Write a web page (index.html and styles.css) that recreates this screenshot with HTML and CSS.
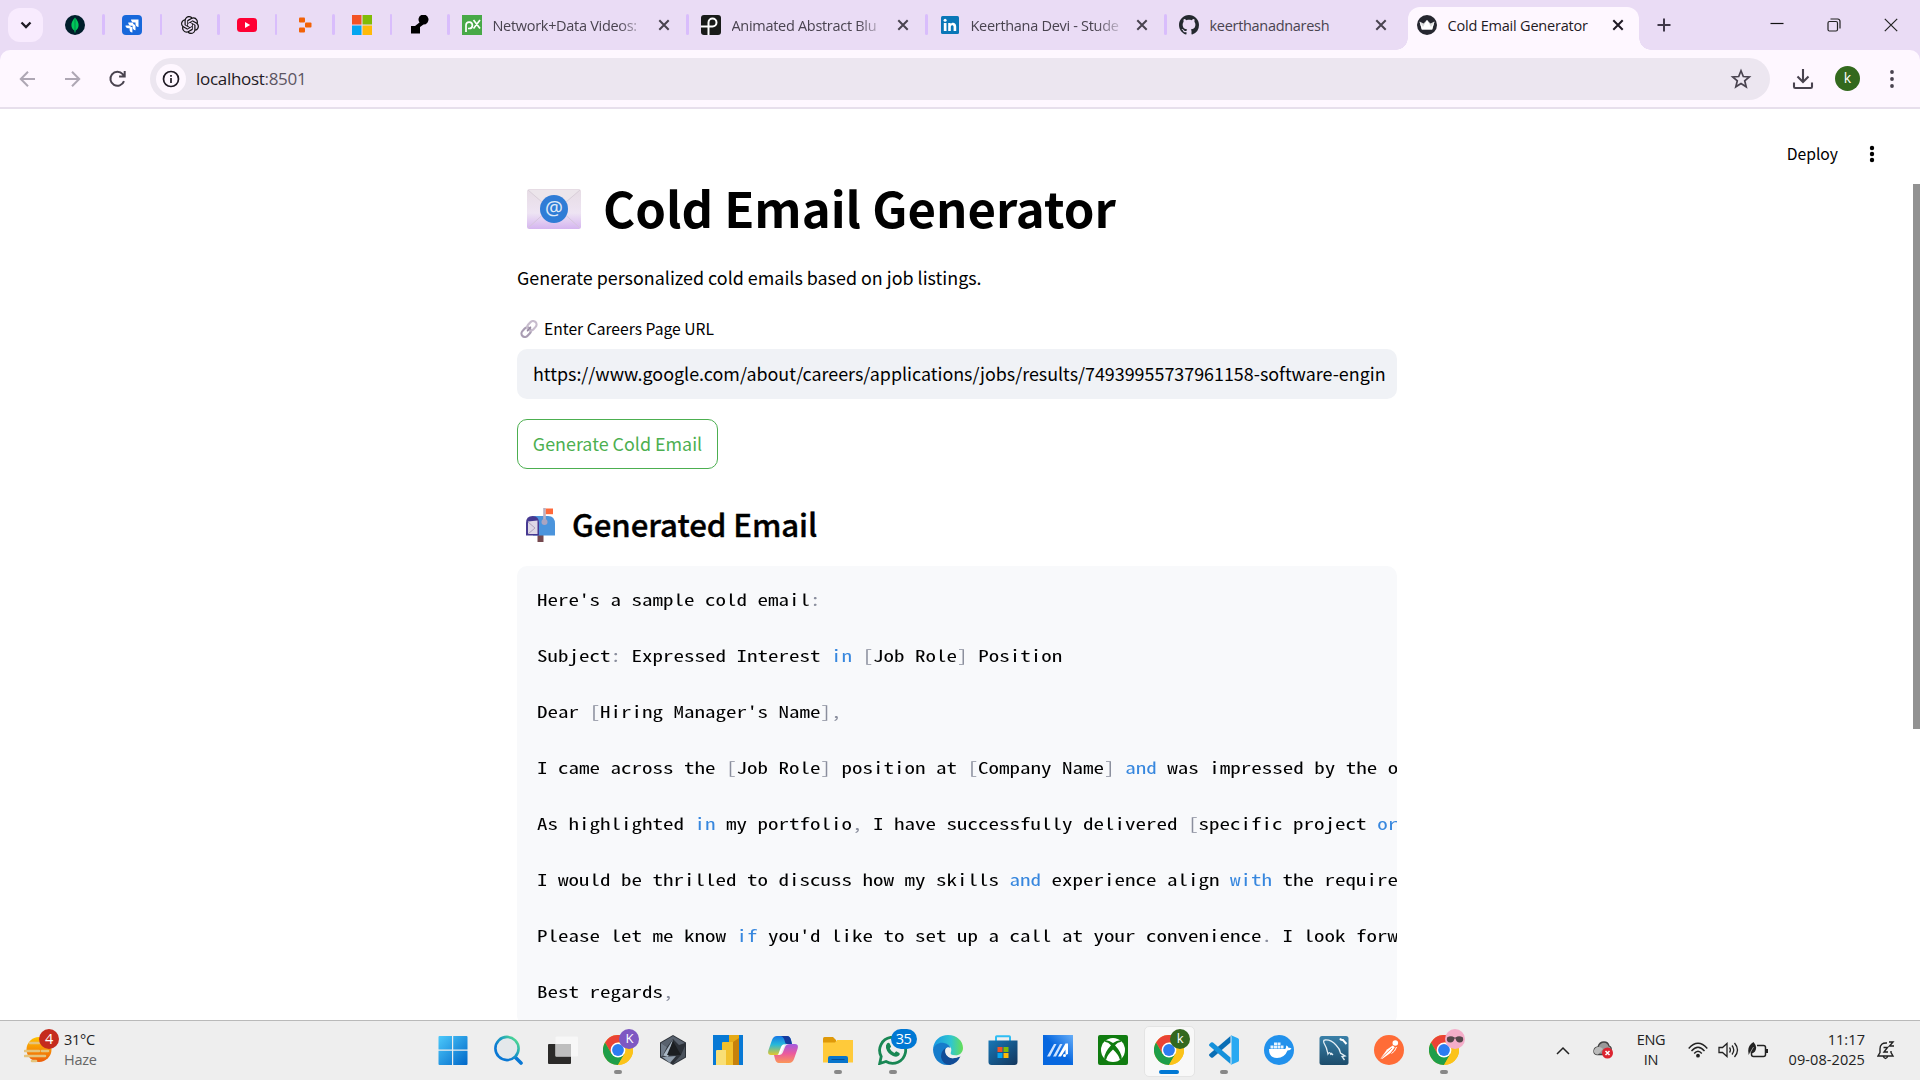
FILE: index.html
```html
<!DOCTYPE html>
<html lang="en">
<head>
<meta charset="utf-8">
<title>Cold Email Generator</title>
<link rel="stylesheet" href="styles.css">
</head>
<body>
<svg class="defs" aria-hidden="true">
  <symbol id="chrome" viewBox="0 0 30 30">
    <circle cx="15" cy="15" r="15" fill="#fbbc04"/>
    <path d="M2 7.5A15 15 0 0 1 28 7.5H15L8.5 18.7Z" fill="#ea4335"/>
    <path d="M2 7.5A15 15 0 0 0 15 30L21.5 18.7H8.5Z" fill="#1e9e49"/>
    <path d="M28 7.5H15L21.5 18.7 15 30A15 15 0 0 0 28 7.5Z" fill="#fbc31a"/>
    <circle cx="15" cy="15" r="7.4" fill="#fff"/>
    <circle cx="15" cy="15" r="5.9" fill="#2c7cf0"/>
  </symbol>
  <symbol id="close" viewBox="0 0 14 14"><path d="M2.3 2.3l9.4 9.4M11.7 2.3l-9.4 9.4" stroke="currentColor" stroke-width="2" fill="none"/></symbol>
</svg>

<header class="tabstrip">
  <button class="tab-search"><svg width="14" height="14" viewBox="0 0 14 14"><path d="M2.5 4.5L7 9l4.500-4.500" fill="none" stroke="#1f1a24" stroke-width="2.300"/></svg></button>
  <nav class="pinned">
    <span class="pin"><svg width="20" height="20" viewBox="0 0 20 20"><circle cx="10" cy="10" r="10" fill="#001e2b"/><path d="M10 2.500c2.500 3 3.600 5 3.600 7.500 0 2.800-1.400 4.500-3.200 5.800V17.500h-.8v-1.700C7.800 14.500 6.400 12.800 6.400 10c0-2.500 1.100-4.500 3.600-7.500z" fill="#00c85a"/><path d="M10 3v14" stroke="#007a45" stroke-width=".8"/></svg></span>
    <span class="pin"><svg width="20" height="20" viewBox="0 0 20 20"><rect width="20" height="20" rx="4" fill="#1868db"/><path d="M9 4.500h7.500V12c-2 0-3-1.500-3-3V7.500H12c-1.500 0-3-1-3-3z" fill="#fff"/><path d="M6.200 7.500h5V9c1 .3 2 .9 2.300 2v4.200c-1.800 0-2.900-1.400-2.900-2.900v-1.600H9c-1.500 0-2.800-1.300-2.800-3.200z" fill="#fff"/><path d="M3.500 10.500h5v1.200l1.900.5v5.300c-1.800 0-2.800-1.300-2.800-2.700v-1.600H6.100c-1.400 0-2.600-1-2.600-2.700z" fill="#fff"/></svg></span>
    <span class="pin"><svg width="18" height="18" viewBox="0 0 24 24"><path fill="#111" d="M22.282 9.821a5.985 5.985 0 0 0-.516-4.910 6.046 6.046 0 0 0-6.510-2.900A6.065 6.065 0 0 0 4.981 4.182a5.985 5.985 0 0 0-3.998 2.900 6.046 6.046 0 0 0 .743 7.097 5.980 5.980 0 0 0 .510 4.911 6.051 6.051 0 0 0 6.515 2.900A5.985 5.985 0 0 0 13.260 24a6.056 6.056 0 0 0 5.772-4.206 5.990 5.990 0 0 0 3.998-2.900 6.056 6.056 0 0 0-.748-7.073zM13.260 22.430a4.476 4.476 0 0 1-2.876-1.040l.141-.081 4.779-2.758a.795.795 0 0 0 .392-.681v-6.737l2.020 1.169a.071.071 0 0 1 .038.052v5.583a4.504 4.504 0 0 1-4.494 4.494zM3.600 18.304a4.471 4.471 0 0 1-.535-3.014l.142.085 4.783 2.759a.771.771 0 0 0 .780 0l5.843-3.369v2.332a.080.080 0 0 1-.033.062L9.740 19.950a4.499 4.499 0 0 1-6.140-1.646zM2.341 7.896a4.485 4.485 0 0 1 2.366-1.973V11.600a.766.766 0 0 0 .388.676l5.815 3.355-2.020 1.168a.076.076 0 0 1-.071 0l-4.830-2.786A4.504 4.504 0 0 1 2.341 7.872zm16.597 3.855l-5.833-3.387L15.119 7.200a.076.076 0 0 1 .071 0l4.830 2.791a4.494 4.494 0 0 1-.676 8.105v-5.678a.790.790 0 0 0-.407-.667zm2.010-3.023l-.141-.085-4.774-2.782a.776.776 0 0 0-.785 0L9.409 9.230V6.897a.066.066 0 0 1 .028-.061l4.830-2.787a4.499 4.499 0 0 1 6.680 4.660zm-12.640 4.135l-2.020-1.164a.080.080 0 0 1-.038-.057V6.075a4.499 4.499 0 0 1 7.375-3.453l-.142.080-4.778 2.758a.795.795 0 0 0-.393.681zm1.097-2.365l2.602-1.500 2.607 1.500v2.999l-2.597 1.500-2.607-1.500z"/></svg></span>
    <span class="pin"><svg width="20" height="14" viewBox="0 0 20 14"><rect width="20" height="14" rx="3.500" fill="#ff0033"/><path d="M8 4l5.200 3L8 10z" fill="#fff"/></svg></span>
    <span class="pin"><svg width="20" height="20" viewBox="0 0 20 20"><g fill="#f26207"><rect x="4" y="2.500" width="6" height="5" rx="1"/><rect x="10" y="7.500" width="6.500" height="5" rx="1"/><rect x="4" y="12.500" width="6" height="5" rx="1"/></g></svg></span>
    <span class="pin"><svg width="20" height="20" viewBox="0 0 20 20"><path fill="#f35325" d="M0 0h9.500v9.500H0z"/><path fill="#81bc06" d="M10.500 0H20v9.500h-9.500z"/><path fill="#05a6f0" d="M0 10.500h9.500V20H0z"/><path fill="#ffba08" d="M10.500 10.500H20V20h-9.500z"/></svg></span>
    <span class="pin"><svg width="20" height="20" viewBox="0 0 20 20"><path d="M1 11h4l4.500-3.500a5 5 0 1 1 4 2L10 12v6.500H1z" fill="#000"/></svg></span>
  </nav>
  <article class="tab"><svg width="20" height="20" viewBox="0 0 20 20"><path fill="#48a947" d="M0 0h20v20H0z"/><path d="M4 17v-7a3.200 3.200 0 1 1 3.200 3.500H6M11.500 5l6.500 8.500M18 5l-6.500 8.500" fill="none" stroke="#fff" stroke-width="1.700"/></svg><span class="tab-title fade">Network+Data Videos:</span><svg class="x"><use href="#close"/></svg></article>
  <article class="tab"><svg width="20" height="20" viewBox="0 0 20 20"><rect width="20" height="20" rx="3" fill="#191b19"/><path d="M0 11.500h11.500a4 4 0 1 0-4-4V20" fill="none" stroke="#fff" stroke-width="2"/></svg><span class="tab-title fade">Animated Abstract Blu</span><svg class="x"><use href="#close"/></svg></article>
  <article class="tab"><svg width="20" height="20" viewBox="0 0 20 20"><rect x="1" y="1" width="18" height="18" rx="1.500" fill="#0a77b7"/><path d="M3.800 8h2.700v8H3.800zM8.200 8h2.500v1.100c1.500-2.300 5.500-1.500 5.500 2.300V16h-2.600v-4.100c0-2.300-2.800-2-2.800 0V16H8.200z" fill="#fff"/><circle cx="5.100" cy="5.200" r="1.500" fill="#fff"/></svg><span class="tab-title fade">Keerthana Devi - Stude</span><svg class="x"><use href="#close"/></svg></article>
  <article class="tab"><svg width="20" height="20" viewBox="0 0 16 16"><path fill="#24292f" d="M8 0C3.580 0 0 3.580 0 8c0 3.540 2.290 6.530 5.470 7.590.4.070.55-.17.55-.38 0-.19-.01-.82-.01-1.490-2.010.37-2.530-.49-2.690-.94-.09-.23-.48-.94-.82-1.130-.28-.15-.68-.52-.01-.53.63-.01 1.080.58 1.230.82.72 1.210 1.870.87 2.330.66.07-.52.28-.87.51-1.070-1.780-.2-3.640-.89-3.640-3.950 0-.87.31-1.590.82-2.150-.08-.2-.36-1.020.08-2.120 0 0 .67-.21 2.200.82.64-.18 1.320-.27 2-.27s1.360.09 2 .27c1.530-1.040 2.200-.82 2.200-.82.44 1.100.16 1.920.08 2.120.51.56.82 1.270.82 2.150 0 3.070-1.870 3.750-3.650 3.950.29.25.54.73.54 1.480 0 1.070-.01 1.930-.01 2.200 0 .21.15.46.55.38A8.010 8.010 0 0 0 16 8c0-4.420-3.580-8-8-8z"/></svg><span class="tab-title">keerthanadnaresh</span><svg class="x"><use href="#close"/></svg></article>
  <article class="tab active"><svg width="20" height="20" viewBox="0 0 20 20"><circle cx="10" cy="10" r="10" fill="#262730"/><path d="M2.500 6.500L6.500 8.500 10 5l3.500 3.500 4-2-2.300 8H4.800z" fill="#d9dadb"/><path d="M2.500 6.500L6 12l4-7 4 7 3.500-5.500-2.300 8H4.800z" fill="#fff"/></svg><span class="tab-title">Cold Email Generator</span><svg class="x"><use href="#close"/></svg></article>
  <button class="new-tab"><svg width="14" height="14" viewBox="0 0 14 14"><path d="M7 .5v13M.5 7h13" stroke="#40384a" stroke-width="2"/></svg></button>
  <div class="window-buttons">
    <svg width="14" height="14" viewBox="0 0 14 14"><path d="M.5 5.500h13" stroke="#111" stroke-width="1.200"/></svg>
    <svg width="14" height="14" viewBox="0 0 14 14" fill="none" stroke="#222" stroke-width="1.200"><rect x="1" y="3.500" width="9.500" height="9.500" rx="1.500"/><path d="M3.500 1h7.200A2.500 2.500 0 0 1 13 3.500V10.500"/></svg>
    <svg width="14" height="14" viewBox="0 0 14 14"><path d="M.8.8l12.400 12.400M13.200.8L.8 13.200" stroke="#222" stroke-width="1.200"/></svg>
  </div>
</header>

<div class="toolbar-wrap"><div class="toolbar">
  <svg class="nav-icon dim" viewBox="0 0 20 20"><path d="M17 10H3M10 2.800L2.800 10l7.200 7.200"/></svg>
  <svg class="nav-icon dim" viewBox="0 0 20 20"><path d="M2 10h14M9 2.800l7.200 7.200L9 17.200"/></svg>
  <svg class="nav-icon" viewBox="0 0 20 20"><path d="M16 12.200A7 7 0 1 1 14.700 5.200L16.500 7M16.700 2v5.600h-5.600"/></svg>
  <div class="omnibox">
    <span class="info"><svg width="18" height="18" viewBox="0 0 18 18"><circle cx="9" cy="9" r="7.500" fill="none" stroke="#1f1a24" stroke-width="1.700"/><path d="M9 8v5M9 5v1.700" stroke="#1f1a24" stroke-width="1.700"/></svg></span>
    <span class="url">localhost<span>:8501</span></span>
    <svg class="star" width="22" height="22" viewBox="0 0 22 22"><path d="M11 2.800l2.300 5.700 6 .4-4.600 3.900 1.500 6L11 15.500l-5.200 3.300 1.500-6-4.600-3.900 6-.4z" fill="none" stroke="#49434f" stroke-width="1.700"/></svg>
  </div>
  <svg class="download" width="22" height="22" viewBox="0 0 22 22"><path d="M11 1v13M5.500 8.500L11 14l5.500-5.500M2 14.500v4.200q0 1.300 1.300 1.300h15.400q1.300 0 1.300-1.300v-4.200" fill="none" stroke="#49434f" stroke-width="2.100"/></svg>
  <span class="avatar">k</span>
  <svg class="menu" width="6" height="20" viewBox="0 0 6 20" fill="#49434f"><circle cx="3" cy="3" r="1.900"/><circle cx="3" cy="10" r="1.900"/><circle cx="3" cy="17" r="1.900"/></svg>
</div></div>

<main class="page">
  <div class="app-header"><span>Deploy</span><svg width="6" height="18" viewBox="0 0 6 18"><circle cx="3" cy="3" r="2.200"/><circle cx="3" cy="9" r="2.200"/><circle cx="3" cy="15" r="2.200"/></svg></div>
  <div class="scroll-thumb"></div>
  <section class="column">
    <h1><svg width="54" height="40" viewBox="0 0 54 40"><defs><linearGradient id="env" x2="0" y2="1"><stop stop-color="#e6dce4"/><stop offset=".6" stop-color="#eee4f3"/><stop offset="1" stop-color="#d5b5f0"/></linearGradient></defs><rect width="54" height="40" rx="2.500" fill="url(#env)"/><path d="M1 39L21 21M53 39L33 21" stroke="#d5c5dc" fill="none"/><path d="M1 1l22 19q4 3 8 0L53 1" fill="#ece5eb" stroke="#d9ced9"/><circle cx="27" cy="20" r="14" fill="#2f7cd6"/><text x="27" y="26" text-anchor="middle" class="at">@</text></svg><span>Cold Email Generator</span></h1>
    <p class="intro">Generate personalized cold emails based on job listings.</p>
    <label class="field-label"><svg width="18" height="18" viewBox="0 0 18 18" fill="none" stroke-width="2.200"><g transform="rotate(-48 9 9)"><rect x="-.5" y="5.500" width="10.500" height="7" rx="3.500" stroke="#a99db3"/><rect x="8" y="5.500" width="10.500" height="7" rx="3.500" stroke="#c7bccd"/><path d="M6 9h6" stroke="#94879f" stroke-width="1.200"/></g></svg><span>Enter Careers Page URL</span></label>
    <div class="url-input"><span>https://www.google.com/about/careers/applications/jobs/results/74939955737961158-software-engin</span></div>
    <button class="generate">Generate Cold Email</button>
    <h2><svg width="30" height="36" viewBox="0 0 30 36"><path d="M11.500 28h6v7h-6z" fill="#75494f"/><path d="M7 9h15q7 0 7 8v11.500H7z" fill="#4b94dc"/><path d="M0 28.500V16q0-7 6.500-7t6.500 7v12.500z" fill="#463991"/><path d="M2 27V14.500l9.500-1V27z" fill="#ded8e6"/><path d="M2 15l7 6-7 6" fill="none" stroke="#afa3bd"/><path d="M18.500 1v14" stroke="#b9b0c2" stroke-width="2.600"/><circle cx="18.500" cy="15" r="3" fill="#aaa4c1"/><path d="M19.800 1.500H27v5.700h-7.200z" fill="#ff693a"/></svg><span>Generated Email</span></h2>
    <div class="code"><div class="lines">
      <p>Here's a sample cold email<i>:</i></p>
      <p>Subject<i>:</i> Expressed Interest <b>in</b> <i>[</i>Job Role<i>]</i> Position</p>
      <p>Dear <i>[</i>Hiring Manager's Name<i>],</i></p>
      <p>I came across the <i>[</i>Job Role<i>]</i> position at <i>[</i>Company Name<i>]</i> <b>and</b> was impressed by the o</p>
      <p>As highlighted <b>in</b> my portfolio<i>,</i> I have successfully delivered <i>[</i>specific project <b>or</b></p>
      <p>I would be thrilled to discuss how my skills <b>and</b> experience align <b>with</b> the require</p>
      <p>Please let me know <b>if</b> you'd like to set up a call at your convenience<i>.</i> I look forw</p>
      <p>Best regards<i>,</i></p>
    </div></div>
  </section>
</main>

<footer class="taskbar">
  <div class="weather">
    <span class="weather-icon"><svg width="30" height="30" viewBox="0 0 30 30"><defs><linearGradient id="sun" x2="0" y2="1"><stop stop-color="#ffc400"/><stop offset="1" stop-color="#ed5c0b"/></linearGradient></defs><circle cx="15" cy="14.500" r="12.500" fill="url(#sun)"/><g stroke="#e5c47c" stroke-width="2.600" stroke-linecap="round"><path d="M6 8h9M1 16h14M18 16h6M1 21h20M8 26h4"/></g></svg><b>4</b></span>
    <div class="weather-text"><span>31°C</span><span class="muted">Haze</span></div>
  </div>
  <div class="apps">
    <span class="app"><svg viewBox="0 0 30 30"><defs><linearGradient id="win" x2="1" y2="1"><stop stop-color="#4cc9fb"/><stop offset="1" stop-color="#0067c8"/></linearGradient></defs><path fill="url(#win)" d="M.5 2q0-1 1-1H14v13.500H.5zM15.200 1H28.500q1 0 1 1v12.500H15.200zM.5 15.700H14V30H1.500q-1 0-1-1zM15.200 15.700h14.300V29q0 1-1 1H15.200z"/></svg></span>
    <span class="app"><svg viewBox="0 0 30 30"><defs><linearGradient id="ring" x1="0" y1="1" x2="1" y2="0"><stop offset=".3" stop-color="#0a78d4"/><stop offset=".6" stop-color="#1e9fc0"/><stop offset="1" stop-color="#5fee80"/></linearGradient></defs><path d="M22 22l6 6" stroke="#0a78d4" stroke-width="3.600" stroke-linecap="round"/><circle cx="14" cy="13.500" r="11.600" fill="#e4e8eb" stroke="url(#ring)" stroke-width="2.600"/></svg></span>
    <span class="app"><svg viewBox="0 0 30 30"><rect x="0" y="9" width="23" height="20" rx="1" fill="#2b2a29"/><rect x="7.500" y="1.500" width="22.500" height="20" rx="1" fill="#f7f7f7" fill-opacity=".92"/><path d="M7.500 9H23v12.500H7.500z" fill="#bebebe"/></svg></span>
    <span class="app run"><svg viewBox="0 0 30 30"><use href="#chrome"/></svg><b class="profile purple">K</b></span>
    <span class="app"><svg viewBox="0 0 30 30"><path d="M15 0l13 7.500v15L15 30 2 22.500v-15z" fill="#2c3138"/><path d="M15 1l12 7-6 2-6-6-6 8-6-4z" fill="#59626e"/><path d="M3 8l6 4-5 10-1-1z" fill="#707b88"/><path d="M15 4.500l-10 16 5 1.500z" fill="#a9b7c4"/><path d="M4 22l14-1-6 7z" fill="#8f9dab"/><path d="M15 6l8 14-14 0z" fill="#1b1e21"/><path d="M23 20l4-9v11l-12 7z" fill="#4b535d"/></svg></span>
    <span class="app"><svg viewBox="0 0 30 30"><path fill="#0879d5" d="M0 0h30v30H0z"/><path fill="#e5aa17" d="M16 0h10v30H16z"/><path fill="#c7810b" d="M20 7l6-4v27h-6z"/><path fill="#f2c12d" d="M9 8q0-1 1-1h10v23H9z"/><path fill="#f9df76" d="M3 16q0-1 1-1h9v15H3z"/></svg></span>
    <span class="app"><svg viewBox="0 0 30 30"><defs><linearGradient id="c1" x2="0" y2="1"><stop stop-color="#1677e6"/><stop offset=".45" stop-color="#26b8da"/><stop offset="1" stop-color="#e4c72b"/></linearGradient><linearGradient id="c2" x2="0" y2="1"><stop stop-color="#a15be0"/><stop offset=".5" stop-color="#eb5a9e"/><stop offset="1" stop-color="#fb9758"/></linearGradient></defs><path d="M9 1h10q3 0 4 4l1 4h-5q-3 0-4 3l-2 5q-1 3-5 3H3q-4 0-2.500-5L4 5q1.500-4 5-4z" fill="url(#c1)"/><path d="M21 28H11q-3 0-4-4l-1-4h5q3 0 4-3l2-5q1-3 5-3h5q4 0 2.500 5L26 24q-1.500 4-5 4z" fill="url(#c2)"/><path d="M9 1h10q3 0 4 4l1 4h-5q-2 0-2-2-1-5-4-6z" fill="#163b9e"/><path d="M13 12q1-3 5-3h-1l-4 9q-1 2-3 2z" fill="#fff"/></svg></span>
    <span class="app run"><svg viewBox="0 0 30 30"><path d="M0 3.500q0-1.500 1.500-1.500H10l3 3v5H0z" fill="#df9909"/><path d="M0 7.500h12l2-2.500h16v22.500H0z" fill="#ffca3a"/><path d="M5 28v-5q0-2 2-2h16q2 0 2 2v5z" fill="#0875cc"/><path d="M8.500 24.500h13" stroke="#044f95"/></svg></span>
    <span class="app run"><svg viewBox="0 0 30 30"><path d="M3.200 21.500A13 13 0 1 1 8 26.500L1.700 28.500z" fill="none" stroke="#198754" stroke-width="2.800"/><path d="M9 8.500q1.500-1.500 2.700 0l1.400 3-1.300 2q1.300 3 4.600 4.500l1.800-1.700 3.200 1.600q1 1-.4 2.700-2 2-6 .5Q9.500 18.500 8 13q-.5-3 1-4.500z" fill="#198754"/></svg><b class="count">35</b></span>
    <span class="app"><svg viewBox="0 0 30 30"><defs><linearGradient id="ed1"><stop stop-color="#1798e5"/><stop offset=".6" stop-color="#30c6cf"/><stop offset="1" stop-color="#66df54"/></linearGradient></defs><path d="M0 14C1 5 7 0 15 0c9 0 15 6 15 13 0 5-4 7.500-8 7.500-4 0-5.500-1.500-4-3.500C20 11 13 8 8 9c-4 .7-7 3-8 5z" fill="url(#ed1)"/><path d="M0 14C2 9 7 7 11 8c4 .8 6 3 6.500 5-3-2-6.500 1-6.500 5 0 5 5 9 10 8.500-2.500 3-4.500 3.500-7 3.500C6 30 0 23 0 14z" fill="#167ccb"/><path d="M12.500 13q-1.500 6 3 9t12-.7Q24 29 17 30q-8-1-9-8 0-6 4.500-9z" fill="#114c97"/><path d="M13.500 13q-2 3.500 0 7 3 4 7 3l6.500-1.500 1-.5q-4 0-8-1-4-1-2-4 0-2-4.500-3z" fill="#eee" fill-opacity=".9"/></svg></span>
    <span class="app"><svg viewBox="0 0 30 30"><defs><linearGradient id="store" x2="1" y2="1"><stop stop-color="#1877b6"/><stop offset="1" stop-color="#13365d"/></linearGradient></defs><path d="M8 6V2q0-.7.8-.7h12.400q.8 0 .8.700v4" fill="none" stroke="#2fbdf3" stroke-width="2"/><path d="M.5 5.500h29V27q0 3-3 3h-23q-3 0-3-3z" fill="url(#store)"/><path fill="#f35325" d="M9.500 12h5v5h-5z"/><path fill="#81bc06" d="M15.500 12h5v5h-5z"/><path fill="#05a6f0" d="M9.500 18h5v5h-5z"/><path fill="#ffba08" d="M15.500 18h5v5h-5z"/></svg></span>
    <span class="app"><svg viewBox="0 0 30 30"><defs><linearGradient id="asus" x1="0" y1="1" x2="1" y2="0"><stop offset=".5" stop-color="#0767df"/><stop offset="1" stop-color="#67aef8"/></linearGradient></defs><path d="M0 0h30v30H0z" fill="url(#asus)"/><path d="M4 21.500L11 9h2.500L7 21.500zM10 21.500L17 9h2.500L13 21.500z" fill="#cde2ff"/><path d="M15 21.500L22.500 8.500H25V19l-2.500 1v-5.500l-4.500 7z" fill="#fff"/><circle cx="21.500" cy="20.500" r="1.500" fill="#fff"/></svg></span>
    <span class="app"><svg viewBox="0 0 30 30"><rect width="30" height="30" rx="2" fill="#107c10"/><circle cx="15" cy="15" r="12" fill="#fff"/><path d="M6 5.500Q10 4.500 15 8q5-3.500 9-2.500L22.500 7Q20 7 17 10.300q7 7.700 6.700 13.500L22 25q-1-5-7-10.500Q9 20 8 25l-1.700-1.200Q6 18 13 10.300 10 7 7.500 7z" fill="#107c10"/></svg></span>
    <span class="app focused"><svg viewBox="0 0 30 30"><use href="#chrome"/></svg><b class="profile green">k</b></span>
    <span class="app run"><svg viewBox="0 0 30 30"><path d="M21.500 1v6.500L4 22.500q-1 .7-2 0L.5 21q-1-1 0-2z" fill="#0a6eb5"/><path d="M21.500 29v-6.500L4 7.500q-1-.7-2 0L.5 9q-1 1 0 2z" fill="#1591db"/><path d="M21.500 0L29 3.300q1 .5 1 1.500v20.400q0 1-1 1.500L21.500 30q1-.8 1-2V2q0-1.200-1-2z" fill="#29a9f2"/></svg></span>
    <span class="app"><svg viewBox="0 0 30 30"><circle cx="15" cy="15" r="15" fill="#2191ec"/><path d="M5 14h16q1.500-.5 1-3.500 2 .5 2.500 2.300 2-.2 3 .7-1 2-4 2Q20.500 23 13 23 5 23 5 14z" fill="#fff"/><path d="M6.500 10.500h3v3h-3zM10 10.500h3v3h-3zM13.500 10.500h3v3h-3zM17 10.500h2.500v3H17zM10 7.500h3v2.500h-3zM13.500 7.500h3v2.500h-3z" fill="#e9f4fe"/></svg></span>
    <span class="app"><svg viewBox="0 0 30 30"><defs><linearGradient id="sql" x2="0" y2="1"><stop stop-color="#3a80a8"/><stop offset="1" stop-color="#1c4c6b"/></linearGradient></defs><rect x=".5" y="1" width="29" height="29" rx="2.500" fill="url(#sql)"/><path d="M12 20q-1-4-3-1Q8 13 5 8q-1-3 1-3 6-.5 11 5 4 4 4.500 8l4.500 3-3 .5 2.500 3.500M14 20l-2-2" fill="none" stroke="#e5eff5" stroke-width="1.300"/><path d="M21 3.500q1 2 3 1.500l3.500 4" fill="none" stroke="#fff" stroke-width="2"/></svg></span>
    <span class="app"><svg viewBox="0 0 30 30"><circle cx="15" cy="15" r="15" fill="#ff6c37"/><circle cx="21.300" cy="8" r="2.800" fill="#fff"/><path d="M18.800 10.500l2 1.700-4.300 5.800-8.500 6-1.500-.5 6.500-9z" fill="#fff"/><path d="M7 23.500L18 13" stroke="#ff6c37" stroke-width=".8"/><path d="M22.500 12l-2 4-3 2.500" fill="none" stroke="#fff"/></svg></span>
    <span class="app run"><svg viewBox="0 0 30 30"><use href="#chrome"/></svg><b class="profile pink"><svg viewBox="0 0 20 20"><path d="M2 8.500Q6 6 9.500 8.500h1Q14 6 18 8.500q1 5-3.500 5-3.200 0-4-4h-1q-.8 4-4 4-4.500 0-3.500-5z" fill="#55474c"/></svg></b></span>
  </div>
  <div class="tray">
    <svg width="14" height="9" viewBox="0 0 14 9"><path d="M1 8l6-6 6 6" fill="none" stroke="#222" stroke-width="1.500"/></svg>
    <svg class="cloud" width="20" height="18" viewBox="0 0 20 18"><path d="M4 13.500q-3.500-.5-3-4Q1.500 6.500 5 6q1.500-5 6-5 4 0 5 4 3 1 2 5l-2 3.500z" fill="#999" stroke="#444" stroke-width="1.300"/><path d="M5 6q3-.5 5 2l-5 5.500H4Q.5 12.500 1 9.500 2 6 5 6z" fill="#bbb"/><circle cx="14.500" cy="12" r="5.500" fill="#dc2430"/><path d="M12.500 10l4 4m0-4l-4 4" stroke="#fff" stroke-width="1.500"/></svg>
    <div class="lang"><span>ENG</span><span>IN</span></div>
    <svg class="wifi" width="20" height="16" viewBox="0 0 20 16" fill="none" stroke="#222" stroke-width="1.400"><path d="M.7 6.500q9.300-10.500 18.600 0M3.500 9q6.500-7.500 13 0M6.200 11.500q3.800-4.500 7.600 0"/><circle cx="10" cy="13.700" r="1.200" fill="#222"/></svg>
    <svg class="sound" width="21" height="16" viewBox="0 0 21 16" fill="none" stroke="#222" stroke-width="1.300"><path d="M1 5.500h3.500L9 1.500v13l-4.500-4H1z"/><path d="M11.500 5.500q1.800 2.500 0 5M14 3.500q3.500 4.500 0 9M16.500 1q6 7 0 14"/></svg>
    <svg class="battery" width="20" height="17" viewBox="0 0 20 17"><path d="M9 3.500h6.500q2 0 2 2v7q0 2-2 2h-10q-2 0-2-2V11" fill="none" stroke="#222" stroke-width="1.500"/><path d="M18 7h2v4h-2zM.5 11Q-1 4 5.500 0q4.500 5 1.500 9.500-2.500 3-5 1L.5 13z" fill="#222"/><path d="M2 11L5.500 5" stroke="#eee" stroke-width=".6"/></svg>
    <div class="clock"><span>11:17</span><span>09-08-2025</span></div>
    <svg class="bell" width="18" height="19" viewBox="0 0 18 19" fill="none" stroke="#222" stroke-width="1.400"><path d="M10 2Q3 1.500 3 8v3.500L1 15h15l-2-3.500V10M6 15q2.500 5 5 0"/><path d="M6.500 6.500h4L7 11h4M12 1h4l-3.500 4H17"/></svg>
  </div>
</footer>
</body>
</html>
```
FILE: styles.css
```css
* { box-sizing: border-box; }
body {
  margin: 0; width: 1920px; height: 1080px; overflow: hidden;
  display: flex; flex-direction: column; background: #fff; color: #000;
  font-family: "Noto Sans CJK JP", "Noto Sans", sans-serif;
}
svg { display: block; flex: none; }
button { border: 0; padding: 0; background: none; font: inherit; display: flex; align-items: center; justify-content: center; }
.defs { display: none; }

/* Tab strip */
.tabstrip { flex: none; height: 50px; display: flex; background: #eadcf5; font: 14.500px "Open Sans", sans-serif; letter-spacing: -.3px; color: #49434f; }
.tab-search { width: 35px; height: 34px; margin: 8px 3px 0 8px; border-radius: 12px; background: #f8ebfe; }
.pinned { display: flex; width: 402.500px; }
.pin { position: relative; flex: 1; display: flex; align-items: center; justify-content: center; }
.pin::after, .tab::after { content: ""; position: absolute; right: -1px; top: 14px; width: 2.500px; height: 21px; border-radius: 2px; background: #d9bdfc; }
.tab { position: relative; width: 239px; display: flex; align-items: center; padding: 0 17px 0 13px; gap: 11px; }
.tab-title { flex: 1; overflow: hidden; white-space: nowrap; }
.fade { mask-image: linear-gradient(90deg, #000 82%, transparent 101%); }
.x { width: 14px; height: 14px; }
.tab.active { width: 231px; margin: 7px 0 0 3px; padding: 0 14px 7px 9px; border-radius: 12px 12px 0 0; background: #fef7ff; color: #1f1a24; letter-spacing: -.2px; }
.tab.active::before, .tab.active::after { content: ""; position: absolute; display: block; top: auto; bottom: 0; width: 12px; height: 12px; border-radius: 0; }
.tab.active::before { left: -12px; background: radial-gradient(circle at 0 0, transparent 11.500px, #fef7ff 12px); }
.tab.active::after { right: -12px; background: radial-gradient(circle at 100% 0, transparent 11.500px, #fef7ff 12px); }
.tab:has(+ .active)::after { display: none; }
.new-tab { width: 50px; }
.window-buttons { display: flex; gap: 43px; align-items: center; margin: -1px 22px 0 auto; }

/* Toolbar */
.toolbar-wrap { flex: none; background: #eadcf5; }
.toolbar { height: 59px; display: flex; align-items: center; padding: 0 25px 0 18px; background: #fef7ff; border-bottom: 2px solid #e7dfec; border-radius: 10px 10px 0 0; }
.nav-icon { width: 20px; height: 20px; margin-right: 25px; fill: none; stroke: #49434f; stroke-width: 2; }
.nav-icon:nth-child(3) { margin-right: 22px; }
.dim { stroke: #aea7b4; }
.omnibox { flex: 1; height: 42px; display: flex; align-items: center; padding: 0 18px 0 6px; border-radius: 21px; background: #ece6f0; }
.info { width: 30px; height: 30px; border-radius: 50%; background: #fef7ff; display: flex; align-items: center; justify-content: center; }
.url { flex: 1; margin-left: 10px; font: 17px "Open Sans", sans-serif; letter-spacing: -.3px; color: #1f1a24; }
.url span { color: #5c5562; }
.download { margin: 0 21px 0 22px; }
.avatar { width: 25px; height: 25px; border-radius: 50%; background: #33691e; color: #fff; font: 14px/24px "Open Sans", sans-serif; text-align: center; }
.menu { margin-left: 29px; }

/* Page */
.page { position: relative; flex: 1; min-height: 0; overflow: hidden; }
.app-header { position: absolute; top: 32px; right: 45px; height: 26px; display: flex; align-items: center; gap: 31px; font-size: 15.700px; }
.app-header span { padding-bottom: 2px; }
.scroll-thumb { position: absolute; right: 0; top: 75px; width: 7px; height: 545px; background: #929292; }
.column { width: 880px; margin-left: 517px; padding-top: 67px; display: flex; flex-direction: column; }
h1, h2, p { margin: 0; }
h1 { height: 66px; padding-left: 10px; display: flex; align-items: center; gap: 22px; font-size: 49.100px; font-weight: 700; line-height: 66px; white-space: nowrap; }
h1 span { padding-bottom: 4px; }
.at { font: 20px "Noto Sans", sans-serif; fill: #dfe9f8; }
.intro { margin-top: 19px; height: 32px; line-height: 32px; font-size: 17.900px; }
.field-label { margin-top: 23px; height: 26px; padding-left: 3px; display: flex; align-items: center; gap: 6px; font-size: 15.650px; }
.field-label span { padding-bottom: 1px; }
.url-input { margin-top: 7px; height: 50px; padding: 0 10px 0 16px; border-radius: 10px; background: #f0f2f6; line-height: 48px; font-size: 17.900px; letter-spacing: -.008px; }
.url-input span { display: block; overflow: hidden; white-space: nowrap; }
.generate { margin-top: 20px; width: 201px; height: 50px; padding-bottom: 2px; border: 1px solid #4caf50; border-radius: 10px; color: #4caf50; font-size: 17.900px; }
h2 { margin-top: 34px; height: 44px; padding-left: 9px; display: flex; align-items: center; gap: 16px; font-size: 31.200px; font-weight: 500; line-height: 44px; letter-spacing: -.08px; -webkit-text-stroke: .4px #000; }
h2 span { padding-bottom: 2px; }
.code { margin-top: 19px; padding: 19px 0 20px 20px; border-radius: 10px; background: #f8f9fb; overflow: hidden; }
.lines { width: 655px; display: flex; flex-direction: column; gap: 28px; white-space: pre; font: 16px/28px "Noto Sans Mono CJK JP", "Liberation Mono", monospace; transform: scaleX(1.3125); transform-origin: 0 0; }
.lines i { font-style: normal; color: #8a8e9d; }
.lines b { font-weight: inherit; color: #3787de; }

/* Taskbar */
.taskbar { flex: none; height: 60px; padding-bottom: 1px; display: flex; align-items: center; border-top: 1px solid #b9b9b9; background: #eee; color: #222; font: 14.500px/20px "Open Sans", sans-serif; letter-spacing: -.3px; }
.weather { width: 425px; padding-left: 24px; display: flex; align-items: center; gap: 10px; }
.weather-icon { position: relative; }
.weather-icon b { position: absolute; left: 15px; top: -6px; width: 20px; height: 20px; border-radius: 50%; background: #c52b1d; color: #fff; text-align: center; font-weight: 400; }
.weather-text, .lang, .clock { display: flex; flex-direction: column; margin-top: -1px; }
.muted { color: #666; }
.apps { display: flex; }
.app { position: relative; width: 55.080px; height: 58px; display: flex; align-items: center; justify-content: center; }
.app > svg { position: relative; width: 30px; height: 30px; }
.app.run::after, .app.focused::after { content: ""; position: absolute; bottom: 5px; width: 8px; height: 4px; border-radius: 2px; background: #888; }
.app.focused::after { width: 20px; background: #0078d4; }
.app.focused::before { content: ""; position: absolute; left: 3px; top: 5px; width: 49px; height: 49px; border: 1px solid #e4e4e4; border-radius: 5px; background: #f8f8f8; }
.profile { position: absolute; left: 29px; top: 8px; width: 20px; height: 20px; border-radius: 50%; color: #fff; font: 13px/19px "Open Sans", sans-serif; text-align: center; }
.purple { background: #7e57c2; }
.green { background: #33691e; }
.pink { background: #f4adc9; }
.count { position: absolute; left: 25px; top: 8px; width: 26px; height: 20px; border-radius: 10px; background: #0078d4; color: #fff; font-weight: 400; text-align: center; }
.tray { flex: 1; display: flex; align-items: center; padding-right: 25px; justify-content: flex-end; }
.cloud { margin-left: 23px; }
.lang { width: 30px; margin-left: 23px; margin-right: 22px; text-align: center; }
.sound { margin-left: 10px; }
.battery { margin-left: 9px; }
.clock { width: 80px; margin-left: 17px; margin-right: 12px; align-items: flex-end; letter-spacing: .08px; }
```
